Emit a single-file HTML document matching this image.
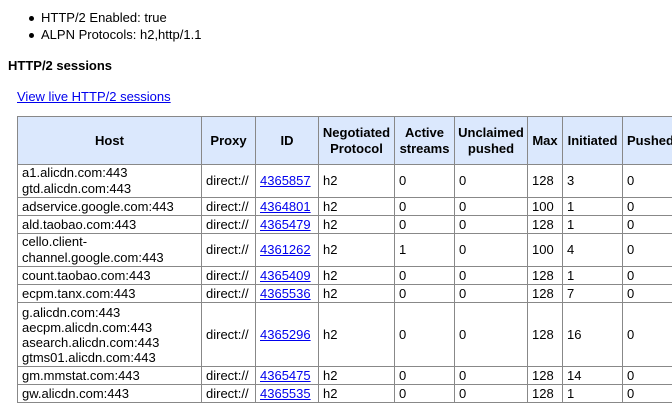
<!DOCTYPE html>
<html><head><meta charset="utf-8"><style>
body{margin:0;font-family:"Liberation Sans",sans-serif;font-size:13px;color:#000;background:#fff;width:672px;height:401px;overflow:hidden;position:relative}
a{color:#0000ee;text-decoration:underline}
.li{position:absolute;left:41px;line-height:16px}
.li:before{content:"";position:absolute;left:-12px;top:6px;width:5px;height:5px;border-radius:50%;background:#000}
h3{position:absolute;left:8px;top:58px;margin:0;font-size:13px;font-weight:bold;line-height:16px}
.lk{position:absolute;left:17px;top:89px;line-height:16px}
table{position:absolute;left:17px;top:116px;border-collapse:collapse;table-layout:fixed;width:680px}
td,th{border:1px solid #888;padding:0 4px;line-height:16px;text-align:left;vertical-align:middle;white-space:nowrap;overflow:hidden}
th{background:#dbe8fd;text-align:center;font-weight:bold;height:47px;padding:0 2px}
tr.r1 td{height:17px}
tr.r2 td{height:32px}
tr.r4 td{height:63px;line-height:15px}
</style></head><body>
<div class="li" style="top:10px">HTTP/2 Enabled: true</div>
<div class="li" style="top:27px">ALPN Protocols: h2,http/1.1</div>
<h3>HTTP/2 sessions</h3>
<div class="lk"><a>View live HTTP/2 sessions</a></div>
<table>
<colgroup><col style="width:184px"><col style="width:54px"><col style="width:63px"><col style="width:76px"><col style="width:60px"><col style="width:73px"><col style="width:35px"><col style="width:60px"><col style="width:75px"></colgroup>
<tr><th>Host</th><th>Proxy</th><th>ID</th><th>Negotiated<br>Protocol</th><th>Active<br>streams</th><th>Unclaimed<br>pushed</th><th>Max</th><th>Initiated</th><th style="text-align:left;padding-left:4px">Pushed</th></tr>
<tr class="r2"><td>a1.alicdn.com:443<br>gtd.alicdn.com:443</td><td>direct://</td><td><a>4365857</a></td><td>h2</td><td>0</td><td>0</td><td>128</td><td>3</td><td>0</td></tr>
<tr class="r1"><td>adservice.google.com:443</td><td>direct://</td><td><a>4364801</a></td><td>h2</td><td>0</td><td>0</td><td>100</td><td>1</td><td>0</td></tr>
<tr class="r1"><td>ald.taobao.com:443</td><td>direct://</td><td><a>4365479</a></td><td>h2</td><td>0</td><td>0</td><td>128</td><td>1</td><td>0</td></tr>
<tr class="r2"><td>cello.client-<br>channel.google.com:443</td><td>direct://</td><td><a>4361262</a></td><td>h2</td><td>1</td><td>0</td><td>100</td><td>4</td><td>0</td></tr>
<tr class="r1"><td>count.taobao.com:443</td><td>direct://</td><td><a>4365409</a></td><td>h2</td><td>0</td><td>0</td><td>128</td><td>1</td><td>0</td></tr>
<tr class="r1"><td>ecpm.tanx.com:443</td><td>direct://</td><td><a>4365536</a></td><td>h2</td><td>0</td><td>0</td><td>128</td><td>7</td><td>0</td></tr>
<tr class="r4"><td>g.alicdn.com:443<br>aecpm.alicdn.com:443<br>asearch.alicdn.com:443<br>gtms01.alicdn.com:443</td><td>direct://</td><td><a>4365296</a></td><td>h2</td><td>0</td><td>0</td><td>128</td><td>16</td><td>0</td></tr>
<tr class="r1"><td>gm.mmstat.com:443</td><td>direct://</td><td><a>4365475</a></td><td>h2</td><td>0</td><td>0</td><td>128</td><td>14</td><td>0</td></tr>
<tr class="r1"><td>gw.alicdn.com:443</td><td>direct://</td><td><a>4365535</a></td><td>h2</td><td>0</td><td>0</td><td>128</td><td>1</td><td>0</td></tr>
</table>
</body></html>
